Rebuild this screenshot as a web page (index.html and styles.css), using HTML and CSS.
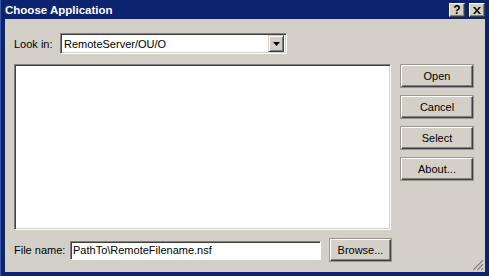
FILE: index.html
```html
<!DOCTYPE html>
<html>
<head>
    <title>Choose Application</title>
    <link rel="stylesheet" href="styles.css">
</head>
<body>
    <div class="window">
        <div class="titlebar">
            <span class="title">Choose Application</span>
            <span class="capbtn">?</span>
            <span class="capbtn close">
                <svg width="8" height="7" viewBox="0 0 8 7"><path d="M0 0h2l2 2.5L6 0h2L5 3.5 8 7H6L4 4.5 2 7H0l3-3.5z" fill="#000"/></svg>
            </span>
        </div>
        <div class="content">
            <div class="lookin">
                <label class="lbl lbl-look">Look in:</label>
                <div class="combo">
                    <span class="combo-text">RemoteServer/OU/O</span>
                    <span class="dropbtn">
                        <svg width="7" height="4" viewBox="0 0 7 4"><path d="M0 0h7L3.5 4z" fill="#000"/></svg>
                    </span>
                </div>
            </div>
            <div class="main">
                <div class="listbox"></div>
                <div class="buttons">
                    <button class="btn">Open</button>
                    <button class="btn">Cancel</button>
                    <button class="btn">Select</button>
                    <button class="btn">About...</button>
                </div>
            </div>
            <div class="filerow">
                <label class="lbl lbl-file">File name:</label>
                <div class="field">PathTo\RemoteFilename.nsf</div>
                <button class="btn browse">Browse...</button>
            </div>
            <svg class="grip" width="13" height="13" viewBox="0 0 13 13">
                <path d="M12 1L1 12M12 5L5 12M12 9L9 12" stroke="#fff" stroke-width="1"/>
                <path d="M12 2L2 12M12 6L6 12M12 10L10 12" stroke="#808080" stroke-width="1.4"/>
            </svg>
        </div>
    </div>
</body>
</html>
```

FILE: styles.css
```css
body {
    margin: 0;
    padding: 0;
    font-family: "Liberation Sans", Arial, sans-serif;
    font-size: 11px;
    color: #000;
}

.window {
    width: 489px;
    height: 276px;
    box-sizing: border-box;
    background-color: #0c2370;
    padding: 0 4px 4px 4px;
    border-left: 1px solid #3a56a8;
    display: flex;
    flex-direction: column;
}

.titlebar {
    height: 19px;
    display: flex;
    align-items: center;
    padding: 0 0 0 1px;
    margin-left: -1px;
}

.title {
    flex: 1;
    color: #fff;
    font-weight: bold;
    font-size: 11.5px;
    padding-top: 1px;
}

.capbtn {
    width: 16px;
    height: 14px;
    box-sizing: border-box;
    background-color: #d4d0c8;
    border: 1px solid;
    border-color: #fff #404040 #404040 #fff;
    box-shadow: inset -1px -1px #808080;
    display: flex;
    align-items: center;
    justify-content: center;
    font-weight: bold;
    font-size: 12px;
    line-height: 1;
    margin-top: 1px;
}

.close {
    margin-left: 4px;
    margin-right: 0;
}

.content {
    flex: 1;
    position: relative;
    background-color: #d4d0c8;
    padding: 14px 9px 0 9px;
}

.lookin {
    display: flex;
    align-items: center;
    height: 21px;
}

.lbl-look {
    width: 46px;
}

.combo {
    width: 227px;
    height: 21px;
    box-sizing: border-box;
    background-color: #fff;
    border: 1px solid;
    border-color: #808080 #fff #fff #808080;
    box-shadow: inset 1px 1px #404040, inset -1px -1px #d4d0c8;
    display: flex;
    align-items: center;
    padding: 2px;
}

.combo-text {
    flex: 1;
    padding-left: 1px;
}

.dropbtn {
    width: 16px;
    height: 17px;
    box-sizing: border-box;
    background-color: #d4d0c8;
    border: 1px solid;
    border-color: #d4d0c8 #404040 #404040 #d4d0c8;
    box-shadow: inset 1px 1px #fff, inset -1px -1px #808080;
    display: flex;
    align-items: center;
    justify-content: center;
}

.main {
    display: flex;
    gap: 10px;
    margin-top: 10px;
}

.listbox {
    width: 377px;
    height: 166px;
    box-sizing: border-box;
    background-color: #fff;
    border: 1px solid;
    border-color: #808080 #fff #fff #808080;
    box-shadow: inset 1px 1px #404040, inset -1px -1px #d4d0c8;
}

.buttons {
    display: flex;
    flex-direction: column;
    gap: 9px;
    margin-top: 1px;
}

.btn {
    width: 72px;
    height: 22px;
    box-sizing: border-box;
    background-color: #d4d0c8;
    border: 1px solid;
    border-color: #fff #404040 #404040 #fff;
    box-shadow: inset -1px -1px #808080, 0 0 0 1px #9a968e;
    font-family: "Liberation Sans", Arial, sans-serif;
    font-size: 11px;
    color: #000;
    padding: 0;
}

.filerow {
    display: flex;
    align-items: center;
    margin-top: 9px;
    height: 22px;
}

.lbl-file {
    width: 56px;
}

.field {
    width: 251px;
    height: 19px;
    box-sizing: border-box;
    background-color: #fff;
    border: 1px solid;
    border-color: #808080 #fff #fff #808080;
    box-shadow: inset 1px 1px #404040;
    padding: 2px 0 0 2px;
    white-space: nowrap;
}

.browse {
    width: 61px;
    margin-left: 9px;
}

.grip {
    position: absolute;
    right: 1px;
    bottom: 1px;
}
```
